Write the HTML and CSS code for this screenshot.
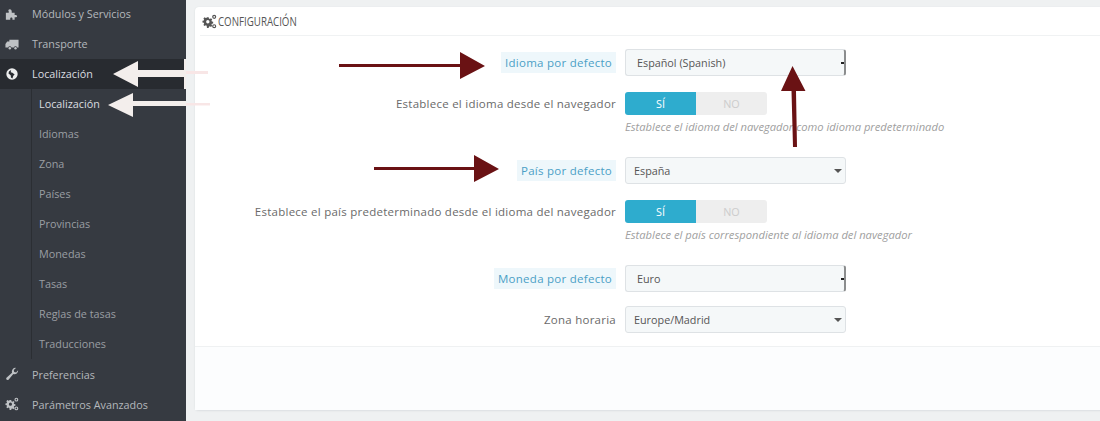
FILE: index.html
```html
<!DOCTYPE html>
<html lang="es">
<head>
  <meta charset="UTF-8" />
  <title>Configuración de localización</title>
  <link rel="stylesheet" href="styles.css">
</head>
<body>
  <nav class="sidebar">
    <div class="nav-item">
      <svg class="nav-icon" viewBox="0 0 16 16"><path d="M1 14.500V6.500h3.300V5C3.300 3.800 4 2.500 5.500 2.500S7.700 3.800 7.700 5v1.500h3.300V9h1.500c1.800 0 1.800 2.800 0 2.800H11v2.700H8.500v-1.500c0-1.500-2.500-1.500-2.500 0v1.500z"/></svg>
      <span>Módulos y Servicios</span>
    </div>
    <div class="nav-item">
      <svg class="nav-icon" viewBox="0 0 16 16"><path d="M5 3h10.500v9h-1.600a2 2 0 0 0-3.800 0H7.400a2 2 0 0 0-3.800 0H.5V8l2-3H5z"/><circle cx="5.500" cy="12.800" r="1.400"/><circle cx="12" cy="12.800" r="1.400"/></svg>
      <span>Transporte</span>
    </div>
    <div class="nav-item active">
      <svg class="nav-icon" viewBox="0 0 16 16"><path fill-rule="evenodd" d="M8 1.500a6.500 6.500 0 1 1 0 13 6.500 6.500 0 0 1 0-13zM4.500 5 4 7.500l2.500 1.800.3 2.700 1.700 1 1-3 1.500-1.500-2.500-2-2-.5.500-2.500z"/></svg>
      <span>Localización</span>
    </div>
    <div class="submenu">
      <div class="sub-item current">Localización</div>
      <div class="sub-item">Idiomas</div>
      <div class="sub-item">Zona</div>
      <div class="sub-item">Países</div>
      <div class="sub-item">Provincias</div>
      <div class="sub-item">Monedas</div>
      <div class="sub-item">Tasas</div>
      <div class="sub-item">Reglas de tasas</div>
      <div class="sub-item">Traducciones</div>
    </div>
    <div class="nav-item lower">
      <svg class="nav-icon" viewBox="0 0 16 16"><path d="M15 3.800a4.200 4.200 0 0 1-5.500 4.300L4 14.500c-1.500 1.300-3.500-.6-2.300-2.200L8 6.500A4.200 4.200 0 0 1 12.500 1L10 3.500l.5 2.200 2.200.5z"/></svg>
      <span>Preferencias</span>
    </div>
    <div class="nav-item lower">
      <svg class="nav-icon" viewBox="0 0 16 16"><use href="#cogs"/></svg>
      <span>Parámetros Avanzados</span>
    </div>
  </nav>

  <main class="content">
    <section class="panel">
      <header class="panel-heading">
        <svg class="heading-icon" viewBox="0 0 16 16">
          <g id="cogs">
            <path fill-rule="evenodd" d="M5.300 3.500h1.800l.3 1.400 1 .4 1.200-.8 1.300 1.300-.8 1.200.4 1 1.400.3v1.800l-1.400.3-.4 1 .8 1.200-1.300 1.300-1.200-.8-1 .4-.3 1.400H5.300L5 12.500l-1-.4-1.200.8-1.300-1.300.8-1.200-.4-1L.5 9.100V7.300l1.400-.3.4-1-.8-1.200 1.300-1.300 1.200.8 1-.4zM6.200 6.400a1.800 1.800 0 1 0 0 3.600 1.800 1.800 0 0 0 0-3.600z"/>
            <path fill-rule="evenodd" d="M13 .8a2.200 2.200 0 1 1 0 4.400 2.200 2.200 0 0 1 0-4.400zm0 1.300a.9.9 0 1 0 0 1.800.9.9 0 0 0 0-1.800zM13 10.800a2.200 2.200 0 1 1 0 4.400 2.200 2.200 0 0 1 0-4.400zm0 1.300a.9.9 0 1 0 0 1.800.9.9 0 0 0 0-1.800z"/>
          </g>
        </svg>
        <span class="heading-text">CONFIGURACIÓN</span>
      </header>

      <form class="panel-body">
        <div class="form-row">
          <div class="field-label"><label class="marked">Idioma por defecto</label></div>
          <div class="select broken">Español (Spanish)</div>
        </div>
        <div class="form-row toggle-row">
          <div class="field-label"><label>Establece el idioma desde el navegador</label></div>
          <div class="toggle"><span class="toggle-on">SÍ</span><span class="toggle-off">NO</span></div>
        </div>
        <p class="hint">Establece el idioma del navegador como idioma predeterminado</p>

        <div class="form-row group">
          <div class="field-label"><label class="marked">País por defecto</label></div>
          <div class="select">España</div>
        </div>
        <div class="form-row toggle-row">
          <div class="field-label"><label>Establece el país predeterminado desde el idioma del navegador</label></div>
          <div class="toggle"><span class="toggle-on">SÍ</span><span class="toggle-off">NO</span></div>
        </div>
        <p class="hint">Establece el país correspondiente al idioma del navegador</p>

        <div class="form-row group">
          <div class="field-label"><label class="marked">Moneda por defecto</label></div>
          <div class="select broken">Euro</div>
        </div>
        <div class="form-row close">
          <div class="field-label"><label>Zona horaria</label></div>
          <div class="select">Europe/Madrid</div>
        </div>
      </form>
      <footer class="panel-footer"></footer>
    </section>
  </main>

  <!-- flechas dibujadas encima de la captura -->
  <svg class="arrows" viewBox="0 0 1100 421">
    <g class="arrow-light">
      <path class="faint" d="M186 71h22v3h-22z"/>
      <path class="faint" d="M186 103h24v2.500h-24z"/>
      <path d="M184 59h2v30h-2z"/>
      <path d="M113 74l25-13v9h48v7h-48v10z"/>
      <path d="M108 105l25-12v8h53v5h-53v11z"/>
    </g>
    <g class="arrow-dark">
      <path d="M339 64h121v-12l25 14-25 13v-12H339z"/>
      <path d="M374 167h100v-12l25 14-25 13v-12H374z"/>
      <path d="M793 147l-1.500-56H781l11.500-25 13 25h-9.500l1 56z"/>
    </g>
  </svg>
</body>
</html>
```

FILE: styles.css
```css
* {
  box-sizing: border-box;
}

html, body {
  height: 421px;
  overflow: hidden;
}

body {
  margin: 0;
  display: flex;
  background-color: #eff1f2;
  color: #666;
  font-family: "Open Sans", sans-serif;
  font-size: 10.8px;
}

.sidebar {
  width: 186px;
  flex-shrink: 0;
  margin-top: -1px;
  background-color: #363a41;
  color: #b4b8bc;
}

.nav-item {
  display: flex;
  align-items: center;
  height: 30px;
  padding: 0 0 1px 5px;
}

.nav-item.lower {
  padding-bottom: 0;
}

.nav-item.active {
  background-color: #282b30;
  color: #dcdee0;
}

.nav-icon {
  width: 14px;
  height: 14px;
  margin-right: 13px;
  fill: #bfc2c5;
}

.nav-item.active .nav-icon {
  fill: #eceded;
}

.submenu {
  margin-left: 31px;
  border-left: 1px solid #2b2e33;
}

.sub-item {
  display: flex;
  align-items: center;
  height: 30px;
  padding: 0 0 2px 7px;
  color: #9a9ea3;
}

.sub-item.current {
  color: #dcdee0;
}

.content {
  flex: 1;
  min-width: 0;
  padding: 7px 0 0 9px;
}

.panel {
  width: 920px;
  height: 403px;
  display: flex;
  flex-direction: column;
  background-color: #fff;
  border-radius: 4px 0 0 4px;
  box-shadow: 0 1px 2px #dcdfe1, 0 0 1px #dfe2e4;
}

.panel-heading {
  display: flex;
  align-items: center;
  height: 29px;
  margin: 0 0 0 5px;
  border-bottom: 1px solid #f0f2f3;
  color: #555;
  font-size: 12px;
}

.heading-icon {
  width: 15px;
  height: 15px;
  margin: 0 1px 0 2px;
  fill: #555;
}

/* no hay fuente condensada instalada */
.heading-text {
  transform: scaleX(0.81);
  transform-origin: left center;
}

.panel-body {
  flex: 1;
  padding-top: 13px;
}

.form-row {
  display: flex;
  align-items: center;
}

.form-row.toggle-row {
  margin-top: 16px;
}

.form-row.group {
  margin-top: 23px;
}

.form-row.close {
  margin-top: 14px;
}

.field-label {
  flex: none;
  width: 421px;
  margin-right: 9px;
  text-align: right;
  font-size: 11.5px;
  letter-spacing: 0.25px;
  color: #6a6a6a;
}

.marked {
  padding: 3px 4px;
  background-color: #eef7fb;
  color: #4b9fc6;
  letter-spacing: 0.27px;
}

.select {
  position: relative;
  flex: none;
  width: 221px;
  height: 27px;
  padding: 0 8px;
  line-height: 26px;
  background-color: #f5f8f9;
  border: 1px solid #dee2e5;
  border-radius: 3px;
  color: #555;
}

.select::after {
  content: "";
  position: absolute;
  right: 3px;
  top: 11px;
  border-style: solid;
  border-width: 4px 4px 0;
  border-color: #555 transparent transparent;
}

.select.broken {
  padding-left: 11px;
  border-right: 2px solid #8b8d8e;
}

.select.broken::after {
  right: 0;
  top: 12px;
  border-width: 0;
  width: 3px;
  height: 2px;
  background-color: #222;
}

.toggle {
  display: flex;
  flex: none;
  width: 142px;
  height: 23px;
  line-height: 23px;
  text-align: center;
  border-radius: 3px;
  overflow: hidden;
}

.toggle-on {
  flex: 1;
  background-color: #2eacce;
  color: #fff;
}

.toggle-off {
  flex: 1;
  background-color: #eeeeee;
  color: #ccc;
}

.hint {
  margin: 4px 0 0 430px;
  font-size: 11.2px;
  line-height: 15px;
  font-style: italic;
  color: #a0a0a0;
  white-space: nowrap;
}

.panel-footer {
  height: 64px;
  background-color: #fcfdfe;
  border-top: 1px solid #eff1f2;
}

.arrows {
  position: absolute;
  left: 0;
  top: 0;
  width: 1100px;
  height: 421px;
  pointer-events: none;
}

.arrow-light {
  fill: #f3eeec;
}

.arrow-light .faint {
  fill: #f8e6e6;
}

.arrow-dark {
  fill: #6a1214;
}
```
